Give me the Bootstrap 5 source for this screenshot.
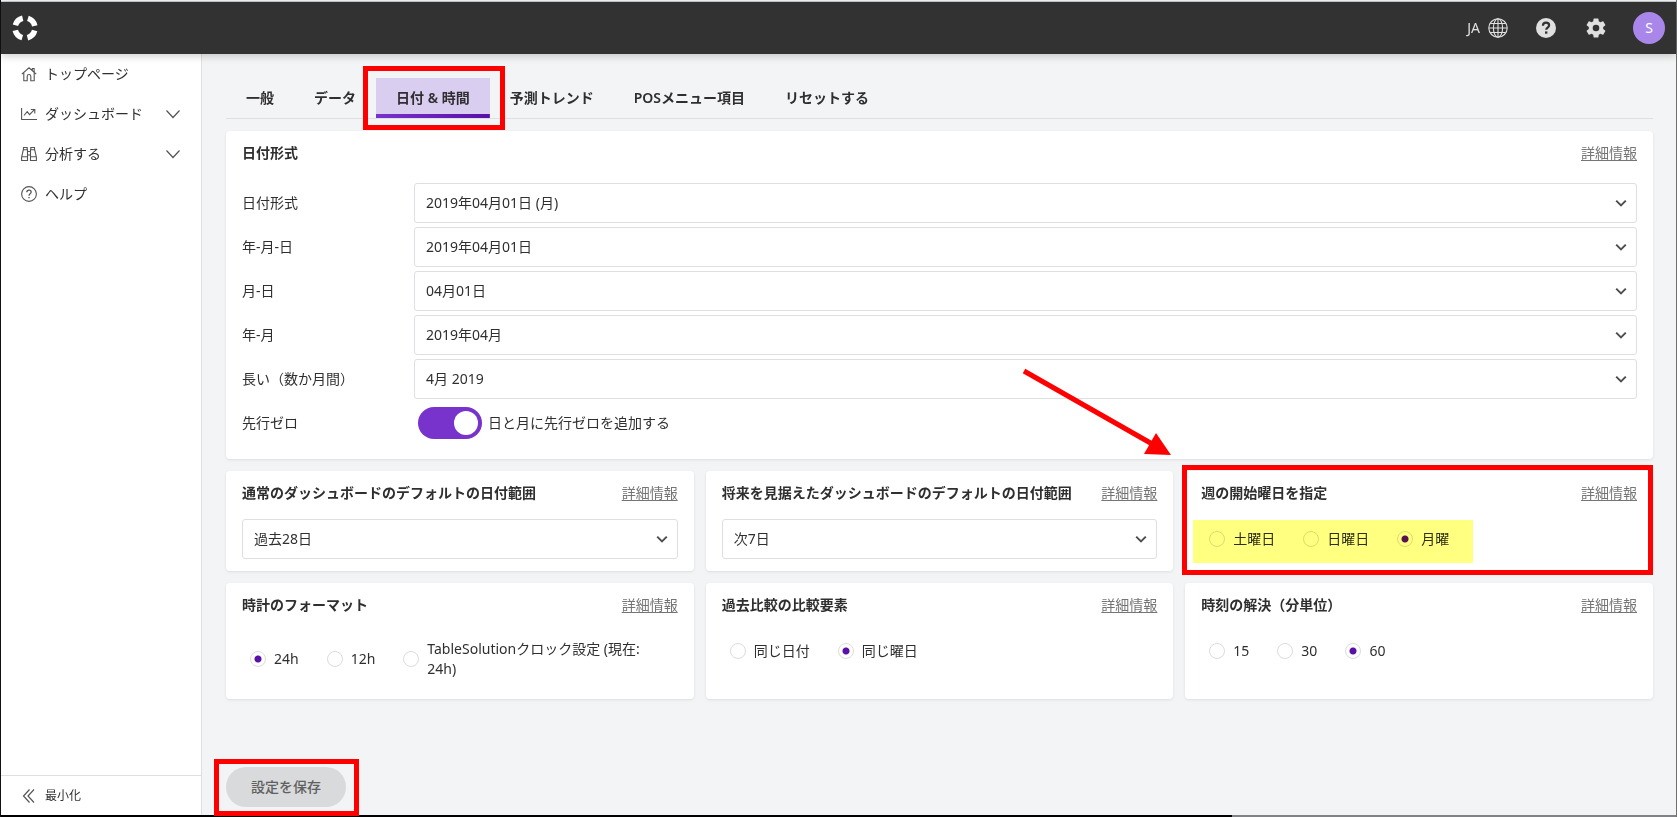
<!DOCTYPE html>
<html lang="ja">
<head>
<meta charset="utf-8">
<meta name="viewport" content="width=device-width, initial-scale=1">
<title>設定 - 日付 &amp; 時間</title>
<link href="https://cdn.jsdelivr.net/npm/bootstrap@5.3.0/dist/css/bootstrap.min.css" rel="stylesheet">
<style>
  :root { --ink: #2f2f31; --line: #dedfe1; --violet: #7733cc; --deep: #5a0fa8; --alert: #ff0000; }
  body { font-family: "Noto Sans", "Noto Sans CJK JP", sans-serif; font-size: 14px; line-height: 20px; color: var(--ink); background: #f3f4f6; }
  .shell { border-left: 1px solid #111; border-right: 1px solid #707070; }
  .edge-top { height: 2px; background: #f4f6f8; border-bottom: 1px solid #c9cdd0; }
  .edge-bottom { height: 2px; background: linear-gradient(90deg, #000 73.5%, #808285 73.5%); }
  .topbar { height: 52px; padding: 0 11px; background: #323232; box-shadow: 0 2px 8px rgba(0,0,0,.2); color: #e0e0e0; z-index: 3; }
  .topbar button { color: inherit; background: none; border: 0; padding: 0; font-size: 14px; line-height: 20px; }
  .topbar .avatar { width: 32px; height: 32px; margin-left: 25px; border-radius: 50%; background: #a987ea; color: #fff; }
  .side { width: 201px; background: #fff; border-right: 1px solid var(--line); }
  .side a { height: 40px; padding: 0 20px; gap: 8px; color: var(--ink); text-decoration: none; }
  .side svg { color: #555; }
  .side .shrink { height: 40px; padding: 0 20px; gap: 8px; font-size: 12px; color: var(--ink); background: #fff; border: 0; border-top: 1px solid var(--line); }
  .work { min-height: 0; }
  .main-pane { padding: 24px 23px 8px 24px; }
  .tabs { border-bottom: 1px solid var(--line); margin-bottom: 12px; }
  .tabs .nav-link { height: 40px; padding: 10px 20px; font-weight: 600; color: var(--ink); border-radius: 0; position: relative; }
  .tabs .nav-link.active { background: linear-gradient(90deg, var(--violet), var(--deep)) bottom / 100% 4px no-repeat #dacef0; }
  .panel { background: #fff; border-radius: 4px; padding: 12px 16px; box-shadow: 0 1px 3px rgba(0,0,0,.09); position: relative; }
  .panel h2 { font-size: 14px; line-height: 20px; font-weight: 600; margin: 0; }
  .panel-head { margin-bottom: 16px; }
  .panel-wide { padding-bottom: 14px; }
  .panel-wide .panel-head { margin-bottom: 18px; }
  .more { color: #757575; text-decoration: underline; white-space: nowrap; text-underline-offset: 2px; }
  .stack { display: grid; gap: 12px; }
  .trio { display: grid; grid-template-columns: repeat(3, minmax(0, 1fr)); gap: 12px; }
  .field { display: grid; grid-template-columns: 172px minmax(0, 1fr); align-items: center; min-height: 44px; }
  .form-select { height: 40px; padding: 0 36px 0 11px; font-size: 14px; line-height: 20px; color: var(--ink); border: 1px solid var(--line); border-radius: 3px;
    background-image: url("data:image/svg+xml,%3Csvg xmlns='http://www.w3.org/2000/svg' viewBox='0 0 12 12'%3E%3Cpath fill='none' stroke='%23505050' stroke-width='2' d='M1.2 3.6 6 8.4l4.800-4.800'/%3E%3C/svg%3E");
    background-size: 12px 12px; background-position: right 9px center; }
  .toggle.form-switch { padding: 0 0 0 4px; min-height: 32px; margin: 0; gap: 6px; }
  .toggle.form-switch .form-check-input { width: 64px; height: 32px; margin: 0; border: 0; background-color: var(--violet);
    background-image: url("data:image/svg+xml,%3Csvg xmlns='http://www.w3.org/2000/svg' viewBox='0 0 32 32'%3E%3Ccircle cx='16' cy='16' r='12' fill='%23fff'/%3E%3C/svg%3E"); background-size: 32px 32px; background-position: right center; }
  .choices { display: inline-flex; min-height: 40px; align-items: center; position: relative; }
  .choices label { display: flex; align-items: center; gap: 8px; padding: 0 20px 0 8px; }
  .choices .tall { padding-top: 8px; padding-bottom: 8px; }
  .choices .form-check-input { width: 16px; height: 16px; margin: 0; flex: none; border: 1px solid #dcdcdc; background-color: transparent; }
  .choices .form-check-input:checked { background-image: radial-gradient(circle, var(--deep) 3px, transparent 4px); }
  .marker::after { content: ""; position: absolute; inset: 1px -4px -4px -8px; background: #ffff80; mix-blend-mode: multiply; pointer-events: none; }
  .callout { position: absolute; border: 5px solid var(--alert); pointer-events: none; z-index: 2; }
  .callout-tab { inset: -12px -15px -12px -13px; }
  .callout-card { inset: -6px 0 -4px -3px; }
  .callout-save { inset: -8px -13px -9px -12px; }
  .pointer { position: absolute; left: -165px; top: -103px; pointer-events: none; }
  .save { width: 120px; height: 40px; padding: 0; border: 0; border-radius: 20px; background: #d9dadc; color: #606060; font-size: 14px; font-weight: 500; }
</style>
<script src="https://cdn.jsdelivr.net/npm/bootstrap@5.3.0/dist/js/bootstrap.bundle.min.js"></script>
</head>
<body>
<div class="shell d-flex flex-column vh-100">
  <div class="edge-top flex-shrink-0"></div>
  <header class="topbar d-flex align-items-center flex-shrink-0 position-relative">
    <a href="#" class="d-flex me-auto" aria-label="ホーム">
      <svg width="26" height="26" viewBox="0 0 26 26"><circle cx="13" cy="13" r="10" fill="none" stroke="#fff" stroke-width="5.600" stroke-dasharray="10.400 5.308" stroke-dashoffset="-2.654"/></svg>
    </a>
    <button class="d-flex align-items-center gap-2" aria-label="言語 JA">JA
      <svg width="20" height="20" viewBox="0 0 20 20" fill="none" stroke="currentColor" stroke-width="1.100"><circle cx="10" cy="10" r="9.200"/><ellipse cx="10" cy="10" rx="4.600" ry="9.200"/><path d="M10 .8v18.400M.8 10h18.400M2.300 5.500h15.400M2.300 14.500h15.400"/></svg>
    </button>
    <button class="d-flex ms-4" aria-label="ヘルプ">
      <svg class="ms-1" width="20" height="20" viewBox="0 0 20 20"><circle cx="10" cy="10" r="10" fill="currentColor"/><path d="M6.900 7.700C7 5.800 8.300 4.700 10.100 4.700c1.800 0 3 1 3 2.600 0 2.300-2.900 2.300-2.900 4.500" fill="none" stroke="#323232" stroke-width="2.200"/><path d="M9 13.400h2.400v2.300H9z" fill="#323232"/></svg>
    </button>
    <button class="d-flex ms-4" aria-label="設定">
      <svg class="ms-1" width="24" height="24" viewBox="0 0 24 24" fill="currentColor"><path d="M19.140 12.940c.04-.3.06-.61.06-.94s-.02-.64-.07-.94l2.030-1.580a.49.49 0 0 0 .12-.61l-1.920-3.320a.49.49 0 0 0-.59-.22l-2.390.96a7 7 0 0 0-1.620-.94l-.36-2.540A.48.48 0 0 0 13.920 2.400h-3.840a.48.48 0 0 0-.48.410l-.36 2.540a7 7 0 0 0-1.620.94l-2.390-.96a.49.49 0 0 0-.59.220L2.720 8.870a.48.48 0 0 0 .12.610l2.030 1.580c-.05.3-.07.62-.07.94s.02.64.07.94l-2.030 1.580a.49.49 0 0 0-.12.610l1.920 3.320c.12.220.37.290.59.220l2.390-.96c.5.38 1.030.7 1.620.94l.36 2.540c.05.240.240.410.48.410h3.840c.240 0 .440-.170.470-.410l.36-2.540a7 7 0 0 0 1.620-.94l2.390.96c.220.080.470 0 .59-.220l1.920-3.320a.48.48 0 0 0-.12-.61zM12 15.300a3.300 3.300 0 1 1 0-6.600 3.300 3.300 0 0 1 0 6.600z"/></svg>
    </button>
    <button class="avatar" aria-label="アカウント">S</button>
  </header>

  <div class="work d-flex flex-grow-1">
    <nav class="side d-flex flex-column flex-shrink-0" aria-label="メイン">
      <a href="#" class="d-flex align-items-center"><svg width="16" height="16" viewBox="0 0 16 16" fill="none" stroke="currentColor" stroke-width="1.100"><path d="M.8 8.200 8 1.800l7.200 6.400M2.800 6.800v8h3.400v-4.600c0-2.200 3.600-2.200 3.600 0v4.600h3.400v-8M11.300 4.200V2.500h1.800v3.400"/></svg>トップページ</a>
      <a href="#" class="d-flex align-items-center"><svg width="16" height="16" viewBox="0 0 16 16" fill="none" stroke="currentColor" stroke-width="1.100"><path d="M.6 2v11.500H16M3 9.500l3.200-3.800 2.400 3 4.800-5M9.800 3.500h4v4"/></svg><span class="me-auto">ダッシュボード</span><svg width="16" height="10" viewBox="0 0 16 10" fill="none" stroke="currentColor" stroke-width="1.200"><path d="m1.500 1.500 6.500 7 6.500-7"/></svg></a>
      <a href="#" class="d-flex align-items-center"><svg width="16" height="16" viewBox="0 0 16 16" fill="none" stroke="currentColor" stroke-width="1.100"><path d="M2.500 3.800V1.500h3.700v2.300M9.800 3.800V1.500h3.700v2.300M2.300 3.800h4.200v10.700H.6v-3.200zM9.500 3.800h4.200l1.700 7.500v3.200H9.500zM.6 10.800h5.900M9.500 10.800h5.900M6.500 5.500h3M6.500 9h3"/></svg><span class="me-auto">分析する</span><svg width="16" height="10" viewBox="0 0 16 10" fill="none" stroke="currentColor" stroke-width="1.200"><path d="m1.500 1.500 6.500 7 6.500-7"/></svg></a>
      <a href="#" class="d-flex align-items-center"><svg width="16" height="16" viewBox="0 0 16 16" fill="none" stroke="currentColor" stroke-width="1.100"><circle cx="8" cy="8" r="7.400"/><path stroke-width="1.300" d="M5.800 6.300c0-1.400.9-2.200 2.200-2.200s2.200.8 2.200 2C10.200 7.800 8 7.800 8 9.700M8 10.900v1.400"/></svg>ヘルプ</a>
      <button class="shrink d-flex align-items-center mt-auto"><svg width="16" height="16" viewBox="0 0 16 16" fill="none" stroke="currentColor" stroke-width="1.200"><path d="M8.500 1.500 2.500 8l6 6.500M13 1.500 7 8l6 6.500"/></svg>最小化</button>
    </nav>

    <main class="main-pane d-flex flex-column flex-grow-1">
      <ul class="tabs nav">
        <li class="nav-item"><a class="nav-link" href="#">一般</a></li>
        <li class="nav-item"><a class="nav-link" href="#">データ</a></li>
        <li class="nav-item"><a class="nav-link active" aria-current="page" href="#">日付 &amp; 時間<span class="callout callout-tab"></span></a></li>
        <li class="nav-item"><a class="nav-link" href="#">予測トレンド</a></li>
        <li class="nav-item"><a class="nav-link" href="#">POSメニュー項目</a></li>
        <li class="nav-item"><a class="nav-link" href="#">リセットする</a></li>
      </ul>

      <form class="stack">
        <section class="panel panel-wide">
          <div class="panel-head d-flex justify-content-between"><h2>日付形式</h2><a class="more" href="#">詳細情報</a></div>
          <div class="field"><label for="f1">日付形式</label><select class="form-select" id="f1"><option>2019年04月01日 (月)</option></select></div>
          <div class="field"><label for="f2">年-月-日</label><select class="form-select" id="f2"><option>2019年04月01日</option></select></div>
          <div class="field"><label for="f3">月-日</label><select class="form-select" id="f3"><option>04月01日</option></select></div>
          <div class="field"><label for="f4">年-月</label><select class="form-select" id="f4"><option>2019年04月</option></select></div>
          <div class="field"><label for="f5">長い（数か月間）</label><select class="form-select" id="f5"><option>4月 2019</option></select></div>
          <div class="field"><span>先行ゼロ</span><div class="toggle form-check form-switch d-flex align-items-center"><input class="form-check-input" type="checkbox" role="switch" id="zero" checked><label for="zero">日と月に先行ゼロを追加する</label></div></div>
        </section>

        <div class="trio">
          <section class="panel">
            <div class="panel-head d-flex justify-content-between"><h2>通常のダッシュボードのデフォルトの日付範囲</h2><a class="more" href="#">詳細情報</a></div>
            <select class="form-select" aria-label="通常のダッシュボードのデフォルトの日付範囲"><option>過去28日</option></select>
          </section>
          <section class="panel">
            <div class="panel-head d-flex justify-content-between"><h2>将来を見据えたダッシュボードのデフォルトの日付範囲</h2><a class="more" href="#">詳細情報</a></div>
            <select class="form-select" aria-label="将来を見据えたダッシュボードのデフォルトの日付範囲"><option>次7日</option></select>
          </section>
          <section class="panel">
            <div class="panel-head d-flex justify-content-between"><h2>週の開始曜日を指定</h2><a class="more" href="#">詳細情報</a></div>
            <div class="choices marker" role="radiogroup" aria-label="週の開始曜日を指定">
              <label><input class="form-check-input" type="radio" name="week">土曜日</label>
              <label><input class="form-check-input" type="radio" name="week">日曜日</label>
              <label><input class="form-check-input" type="radio" name="week" checked>月曜</label>
            </div>
            <span class="callout callout-card"></span>
            <svg class="pointer" width="155" height="90" viewBox="0 0 155 90" aria-hidden="true"><path d="M4 3 134 77" stroke="#f00" stroke-width="5"/><path d="m151 87-15-22-12 21z" fill="#f00"/></svg>
          </section>
          <section class="panel">
            <div class="panel-head d-flex justify-content-between"><h2>時計のフォーマット</h2><a class="more" href="#">詳細情報</a></div>
            <div class="choices" role="radiogroup" aria-label="時計のフォーマット">
              <label><input class="form-check-input" type="radio" name="clock" checked>24h</label>
              <label><input class="form-check-input" type="radio" name="clock">12h</label>
              <label class="tall"><input class="form-check-input" type="radio" name="clock">TableSolutionクロック設定 (現在: 24h)</label>
            </div>
          </section>
          <section class="panel">
            <div class="panel-head d-flex justify-content-between"><h2>過去比較の比較要素</h2><a class="more" href="#">詳細情報</a></div>
            <div class="choices" role="radiogroup" aria-label="過去比較の比較要素">
              <label><input class="form-check-input" type="radio" name="compare">同じ日付</label>
              <label><input class="form-check-input" type="radio" name="compare" checked>同じ曜日</label>
            </div>
          </section>
          <section class="panel">
            <div class="panel-head d-flex justify-content-between"><h2>時刻の解決（分単位）</h2><a class="more" href="#">詳細情報</a></div>
            <div class="choices" role="radiogroup" aria-label="時刻の解決（分単位）">
              <label><input class="form-check-input" type="radio" name="step">15</label>
              <label><input class="form-check-input" type="radio" name="step">30</label>
              <label><input class="form-check-input" type="radio" name="step" checked>60</label>
            </div>
          </section>
        </div>
      </form>

      <div class="mt-auto d-flex"><div class="position-relative"><button class="save d-block" type="button">設定を保存</button><span class="callout callout-save"></span></div></div>
    </main>
  </div>
  <div class="edge-bottom flex-shrink-0"></div>
</div>
</body>
</html>
